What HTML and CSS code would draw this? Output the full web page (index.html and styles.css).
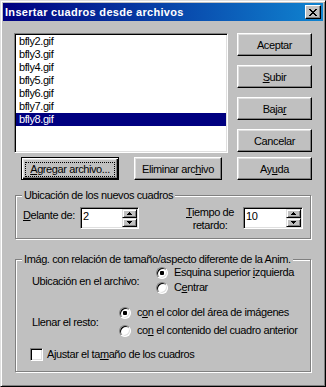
FILE: index.html
```html
<!DOCTYPE html>
<html lang="es">
<head>
<meta charset="utf-8">
<title>Insertar cuadros desde archivos</title>
<link rel="stylesheet" href="styles.css">
</head>
<body>
<div class="window">
  <div class="titlebar">
    <span class="title">Insertar cuadros desde archivos</span>
    <span class="close">
      <svg width="8" height="7" viewBox="0 0 8 7"><path d="M0 0h2v1H0zM6 0h2v1H6zM1 1h2v1H1zM5 1h2v1H5zM2 2h4v1H2zM3 3h2v1H3zM2 4h4v1H2zM1 5h2v1H1zM5 5h2v1H5zM0 6h2v1H0zM6 6h2v1H6z" fill="#000"/></svg>
    </span>
  </div>
  <div class="content">
    <div class="top">
      <div class="list">
        <div class="item">bfly2.gif</div>
        <div class="item">bfly3.gif</div>
        <div class="item">bfly4.gif</div>
        <div class="item">bfly5.gif</div>
        <div class="item">bfly6.gif</div>
        <div class="item">bfly7.gif</div>
        <div class="item sel">bfly8.gif</div>
      </div>
      <div class="side">
        <button class="btn">Aceptar</button>
        <button class="btn"><u>S</u>ubir</button>
        <button class="btn">Baja<u>r</u></button>
        <button class="btn">Cancelar</button>
      </div>
    </div>
    <div class="row">
      <button class="btn default w-add"><span class="focus"><u>A</u>gregar archivo...</span></button>
      <button class="btn w-del">Eliminar arc<u>h</u>ivo</button>
      <button class="btn">Ay<u>u</u>da</button>
    </div>
    <fieldset class="group g1">
      <legend>Ubicación de los nuevos cuadros</legend>
      <div class="g1-inner">
        <span class="lbl-delante"><u>D</u>elante de:</span>
        <div class="spin s1">
          <span class="val">2</span>
          <span class="arrows">
            <span class="arr"><svg width="5" height="3" viewBox="0 0 5 3"><path d="M2 0h1v1h1v1h1v1H0V2h1V1h1z"/></svg></span>
            <span class="arr"><svg width="5" height="3" viewBox="0 0 5 3"><path d="M0 0h5v1H4v1H3v1H2V2H1V1H0z"/></svg></span>
          </span>
        </div>
        <span class="lbl-tiempo"><u>T</u>iempo de<br>retardo:</span>
        <div class="spin s2">
          <span class="val">10</span>
          <span class="arrows">
            <span class="arr"><svg width="5" height="3" viewBox="0 0 5 3"><path d="M2 0h1v1h1v1h1v1H0V2h1V1h1z"/></svg></span>
            <span class="arr"><svg width="5" height="3" viewBox="0 0 5 3"><path d="M0 0h5v1H4v1H3v1H2V2H1V1H0z"/></svg></span>
          </span>
        </div>
      </div>
    </fieldset>
    <fieldset class="group g2">
      <legend>Imág. con relación de tamaño/aspecto diferente de la Anim.</legend>
      <div class="g2-inner">
        <div class="sec sec-a">
          <span class="sec-lbl lbl-a">Ubicación en el archivo:</span>
          <div class="opts">
            <div class="opt"><span class="radio on"></span><span>Esquina superior <u>i</u>zquierda</span></div>
            <div class="opt"><span class="radio"></span><span>C<u>e</u>ntrar</span></div>
          </div>
        </div>
        <div class="sec sec-b">
          <span class="sec-lbl lbl-b">Llenar el resto:</span>
          <div class="opts opts-b">
            <div class="opt"><span class="radio on"></span><span>c<u>o</u>n el color del área de imágenes</span></div>
            <div class="opt"><span class="radio"></span><span>co<u>n</u> el contenido del cuadro anterior</span></div>
          </div>
        </div>
        <div class="check-row">
          <span class="check"></span><span>Ajustar el ta<u>m</u>año de los cuadros</span>
        </div>
      </div>
    </fieldset>
  </div>
</div>
</body>
</html>
```

FILE: styles.css
```css
html, body {
  margin: 0;
  padding: 0;
  background: #c0c0c0;
}
body {
  font-family: "Liberation Sans", Arial, sans-serif;
  font-size: 11px;
  line-height: 13px;
  letter-spacing: -0.4px;
  color: #000;
}
.window {
  width: 326px;
  height: 387px;
  box-sizing: border-box;
  border: 1px solid;
  border-color: #dfdfdf #000 #000 #dfdfdf;
  box-shadow: inset 1px 1px #fff, inset -1px -1px #808080;
  padding: 2px;
  background: #c0c0c0;
}
.titlebar {
  height: 18px;
  display: flex;
  align-items: center;
  justify-content: space-between;
  padding: 0 2px 0 2px;
  background: linear-gradient(to right, #000080, #1084d0);
  color: #fff;
  font-weight: bold;
  line-height: 18px;
  letter-spacing: 0.3px;
}
.close {
  width: 16px;
  height: 14px;
  box-sizing: border-box;
  background: #c0c0c0;
  border: 1px solid;
  border-color: #fff #000 #000 #fff;
  box-shadow: inset -1px -1px #808080;
  display: flex;
  align-items: center;
  justify-content: center;
}
.close svg { display: block; margin-left: -1px; }
.content {
  padding: 12px 11px 0 11px;
}
.top {
  display: flex;
  gap: 9px;
}
.list {
  width: 214px;
  height: 120px;
  box-sizing: border-box;
  background: #fff;
  border: 1px solid;
  border-color: #808080 #fff #fff #808080;
  box-shadow: inset 1px 1px #000, inset -1px -1px #dfdfdf;
  padding: 1px;
}
.item {
  height: 13px;
  padding-left: 3px;
  white-space: nowrap;
}
.item.sel {
  background: #000080;
  color: #fff;
}
.side {
  display: flex;
  flex-direction: column;
  gap: 9px;
}
.btn {
  font: inherit;
  letter-spacing: inherit;
  color: #000;
  width: 75px;
  height: 23px;
  box-sizing: border-box;
  margin: 0;
  padding: 2px 0 0 0;
  text-align: center;
  line-height: 13px;
  background: #c0c0c0;
  border: 1px solid;
  border-color: #fff #000 #000 #fff;
  box-shadow: inset -1px -1px #808080, inset 1px 1px #dfdfdf;
  vertical-align: top;
  white-space: nowrap;
}
.row {
  display: flex;
  gap: 15px;
  margin-top: 4px;
  padding-left: 7px;
}
.w-add { width: 98px; }
.w-del { width: 88px; }
.btn.default {
  border-color: #000;
  box-shadow: inset 1px 1px #fff, inset -1px -1px #000, inset -2px -2px #808080, inset 2px 2px #dfdfdf;
  padding: 2px 3px 0 3px;
}
.focus {
  display: block;
  border: 1px dotted #000;
  line-height: 13px;
  margin-top: -1px;
}
.group {
  margin: 0 0 0 1px;
  padding: 0;
  width: 296px;
  min-width: 0;
  box-sizing: border-box;
  border: 1px solid #808080;
  box-shadow: inset 1px 1px #fff, 1px 1px #fff;
}
.group legend {
  margin: 0 0 0 6px;
  padding: 0 2px;
  line-height: 13px;
  background: #c0c0c0;
  white-space: nowrap;
}
.g1 { margin-top: 9px; }
.g1-inner {
  height: 36px;
  box-sizing: border-box;
  display: flex;
  align-items: flex-start;
  padding: 5px 0 0 7px;
}
.lbl-delante {
  width: 57px;
  margin-top: 2px;
  white-space: nowrap;
}
.spin {
  height: 22px;
  box-sizing: border-box;
  background: #fff;
  border: 1px solid;
  border-color: #808080 #fff #fff #808080;
  box-shadow: inset 1px 1px #000, inset -1px -1px #dfdfdf;
  padding: 1px;
  display: flex;
  justify-content: space-between;
}
.s1 { width: 59px; }
.s2 { width: 60px; margin-left: 3px; }
.val {
  padding-left: 1px;
  line-height: 13px;
  margin-top: 1px;
}
.arrows {
  display: flex;
  flex-direction: column;
  width: 15px;
}
.arr {
  height: 9px;
  box-sizing: border-box;
  background: #c0c0c0;
  border: 1px solid;
  border-color: #dfdfdf #000 #000 #dfdfdf;
  box-shadow: inset 1px 1px #fff, inset -1px -1px #808080;
  display: flex;
  align-items: center;
  justify-content: center;
}
.arr svg { display: block; }
.lbl-tiempo {
  width: 60px;
  margin-left: 41px;
  margin-top: -1px;
  text-align: center;
}
.g2 { margin-top: 14px; }
.g2-inner {
  height: 105px;
  box-sizing: border-box;
  padding: 0 0 0 16px;
}
.sec {
  display: flex;
  align-items: flex-start;
}
.sec-lbl { white-space: nowrap; }
.lbl-a { width: 124px; margin-top: 9px; }
.lbl-b { width: 87px; margin-top: 10px; }
.sec-b { margin-top: 12px; }
.opts {
  display: flex;
  flex-direction: column;
  gap: 2px;
}
.opts-b { gap: 5px; }
.opt {
  display: flex;
  align-items: center;
  gap: 6px;
  height: 13px;
  white-space: nowrap;
}
.radio {
  position: relative;
  width: 12px;
  height: 12px;
  flex: none;
  box-sizing: border-box;
  border-radius: 50%;
  background: #fff;
  border: 1px solid;
  border-color: #808080 #fff #fff #808080;
  box-shadow: inset 1px 1px #000, inset -1px -1px #dfdfdf;
}
.radio.on::after {
  content: "";
  position: absolute;
  left: 3px;
  top: 3px;
  width: 4px;
  height: 4px;
  border-radius: 1px;
  background: #000;
}
.check-row {
  display: flex;
  align-items: center;
  gap: 4px;
  margin-top: 11px;
  margin-left: -2px;
  height: 13px;
}
.check {
  width: 13px;
  height: 13px;
  flex: none;
  box-sizing: border-box;
  background: #fff;
  border: 1px solid;
  border-color: #808080 #fff #fff #808080;
  box-shadow: inset 1px 1px #000, inset -1px -1px #dfdfdf;
}
```
